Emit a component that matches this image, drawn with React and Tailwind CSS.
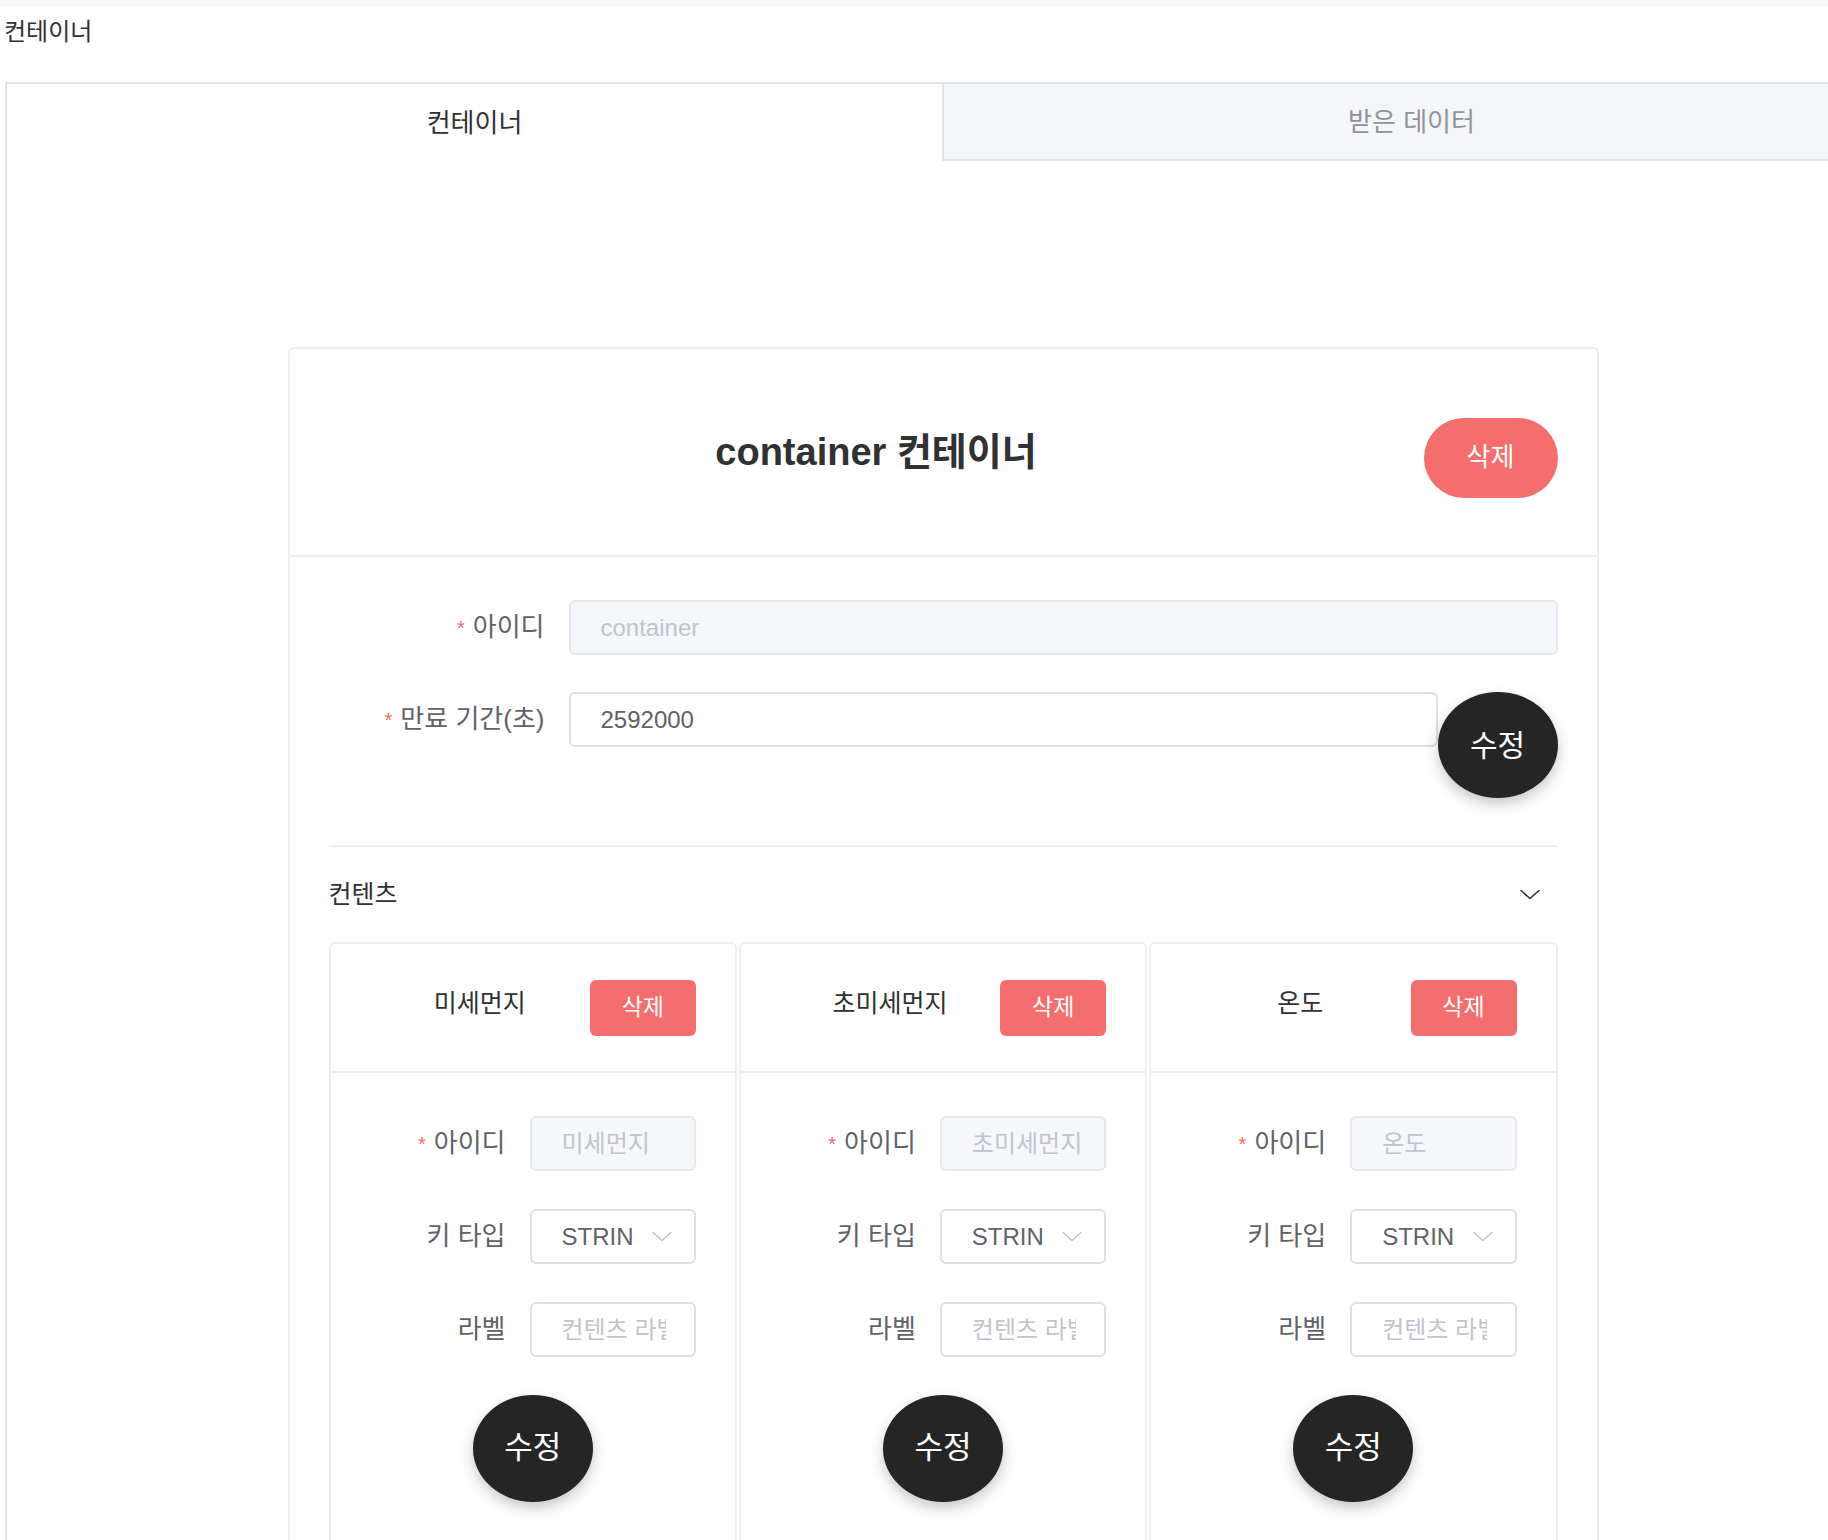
import { useState } from "react";

const contents = [
  { id: "미세먼지", keyType: "STRIN" },
  { id: "초미세먼지", keyType: "STRIN" },
  { id: "온도", keyType: "STRIN" },
];

function Chevron({ className }) {
  return (
    <svg className={className} viewBox="0 0 20 11" fill="none" stroke="currentColor" strokeWidth="1.6" strokeLinecap="round" strokeLinejoin="round">
      <path d="M1 1.5l9 8 9-8" />
    </svg>
  );
}

function Label({ required, children, className }) {
  return (
    <div className={`flex h-[55px] shrink-0 items-center justify-end pr-[24px] text-[26px] text-[#606266] ${className}`}>
      {required && <span className="mr-[8px] text-[20px] text-[#f56c6c]">*</span>}
      {children}
    </div>
  );
}

function ContentCard({ item }) {
  return (
    <div className="rounded-[6px] border-2 border-[#ebeef5] bg-white">
      {/* 카드 헤더 */}
      <div className="flex h-[129px] items-center border-b-2 border-[#ebeef5] px-[39px]">
        <div className="flex-1 pb-[7px] text-center text-[25px] text-[#303133]">{item.id}</div>
        <button className="h-[56px] w-[106px] rounded-[6px] bg-[#f46e6e] text-[23px] text-white">삭제</button>
      </div>

      <div className="px-[39px] pt-[43px] pb-[60px]">
        <div className="mb-[38px] flex">
          <Label required className="w-[160px]">아이디</Label>
          <input
            disabled
            placeholder={item.id}
            className="h-[55px] min-w-0 flex-1 rounded-[6px] border-2 border-[#e4e7ed] bg-[#f5f7fa] pl-[30px] pr-[20px] text-[24px] placeholder:text-[#c0c4cc]"
          />
        </div>
        <div className="mb-[38px] flex">
          <Label className="w-[160px]">키 타입</Label>
          <div className="flex h-[55px] min-w-0 flex-1 items-center justify-between rounded-[6px] border-2 border-[#dcdfe6] pl-[30px] pr-[22px] text-[24px] text-[#606266]">
            <span>{item.keyType}</span>
            <Chevron className="h-[11px] w-[20px] text-[#c0c4cc]" />
          </div>
        </div>
        <div className="mb-[38px] flex">
          <Label className="w-[160px]">라벨</Label>
          <input
            placeholder="컨텐츠 라벨"
            className="h-[55px] w-[166px] min-w-0 flex-1 rounded-[6px] border-2 border-[#dcdfe6] bg-white pl-[30px] pr-[28px] text-[24px] outline-none placeholder:text-[#c0c4cc]"
          />
        </div>
        <div className="flex justify-center">
          <button className="h-[107px] w-[120px] rounded-[50%] bg-[#252525] text-[31px] text-white shadow-[0_6px_14px_rgba(0,0,0,0.22)]">
            수정
          </button>
        </div>
      </div>
    </div>
  );
}

export default function App() {
  const [tab, setTab] = useState(0);
  const [open, setOpen] = useState(true);
  const [ttl, setTtl] = useState("2592000");

  return (
    <div className="h-screen w-full overflow-hidden bg-white font-['Liberation_Sans','Noto_Sans_CJK_KR',sans-serif] text-[#303133]">
      <div className="h-[6px] bg-[#f7f8fa]" />
      <div className="flex h-[52px] items-center pl-[4px] text-[24px] text-[#303133]">컨테이너</div>

      {/* 탭 */}
      <div className="mt-[24px] ml-[5px] w-[1874px] border-t-2 border-l-2 border-[#dfe3ea]">
        <div className="flex h-[77px]">
          <button
            onClick={() => setTab(0)}
            className="flex flex-1 items-center justify-center pt-[2px] text-[26px] text-[#303133]"
          >
            컨테이너
          </button>
          <button
            onClick={() => setTab(1)}
            className="flex flex-1 items-center justify-center border-b-2 border-l-2 border-[#dfe3ea] bg-[#f5f6f9] pt-[2px] text-[26px] text-[#909399]"
          >
            받은 데이터
          </button>
        </div>

        <div className="pt-[186px]">
          <div className="mx-auto w-[1311px] rounded-[6px] border-2 border-[#ebeef5] bg-white">
            {/* 헤더 */}
            <div className="flex h-[208px] items-center border-b-2 border-[#ebeef5] px-[39px]">
              <div className="flex-1 text-center text-[38px] font-bold text-[#303133]">container 컨테이너</div>
              <button className="mt-[11px] h-[80px] w-[134px] rounded-full bg-[#f46e6e] text-[26px] text-white">삭제</button>
            </div>

            <div className="px-[39px] pt-[43px]">
              <div className="mb-[37px] flex">
                <Label required className="w-[240px]">아이디</Label>
                <input
                  disabled
                  placeholder="container"
                  className="h-[55px] flex-1 rounded-[6px] border-2 border-[#e4e7ed] bg-[#f5f7fa] pl-[30px] text-[24px] placeholder:text-[#c0c4cc]"
                />
              </div>
              <div className="flex items-start">
                <Label required className="w-[240px]">만료 기간(초)</Label>
                <input
                  value={ttl}
                  onChange={(e) => setTtl(e.target.value)}
                  className="h-[55px] flex-1 rounded-[6px] border-2 border-[#dcdfe6] bg-white pl-[30px] text-[24px] text-[#606266] outline-none"
                />
                <button className="h-[106px] w-[120px] rounded-[50%] bg-[#252525] text-[30px] text-white shadow-[0_6px_14px_rgba(0,0,0,0.22)]">
                  수정
                </button>
              </div>

              {/* 컨텐츠 */}
              <div className="mt-[47px] border-t-2 border-[#ebeef5]">
                <button
                  onClick={() => setOpen(!open)}
                  className="flex h-[95px] w-full items-center justify-between pr-[18px] text-[25px] text-[#303133]"
                >
                  <span>컨텐츠</span>
                  <Chevron className="h-[11px] w-[20px] text-[#303133]" />
                </button>
                {open && (
                  <div className="grid grid-cols-3 gap-[2px]">
                    {contents.map((c) => (
                      <ContentCard key={c.id} item={c} />
                    ))}
                  </div>
                )}
              </div>
            </div>
          </div>
        </div>
      </div>
    </div>
  );
}
